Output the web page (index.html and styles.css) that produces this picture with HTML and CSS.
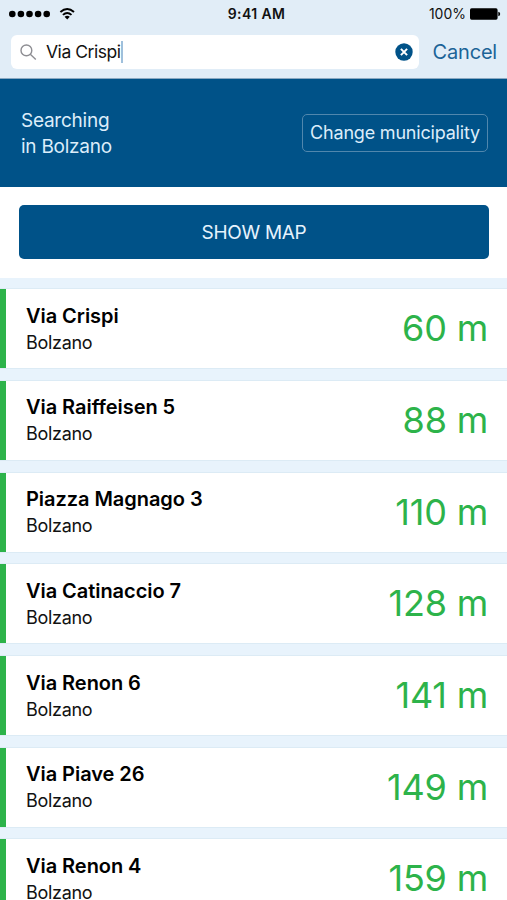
FILE: index.html
```
<!DOCTYPE html>
<html lang="en">

<head>
    <meta charset="utf-8">
    <title>Search address</title>
    <link rel="stylesheet" href="styles.css">
</head>

<body>
    <div id="header">
        <div class="statusbar">
            <div class="signal">
                <svg width="76" height="14" viewBox="0 0 76 14">
                    <circle cx="3.3" cy="7" r="3.3"/>
                    <circle cx="11.9" cy="7" r="3.3"/>
                    <circle cx="20.5" cy="7" r="3.3"/>
                    <circle cx="29.1" cy="7" r="3.3"/>
                    <circle cx="37.7" cy="7" r="3.3"/>
                    <g fill="none" stroke="#000" stroke-width="1.9">
                        <path d="M51.4 5 Q58.2 -1.2 65 5"/>
                        <path d="M53.9 7.9 Q58.2 4 62.5 7.9"/>
                    </g>
                    <path d="M55.6 9.8 Q58.2 7.6 60.8 9.8 L58.2 12.4Z"/>
                </svg>
            </div>
            <div class="clock">9:41 AM</div>
            <div class="battery">
                <span>100%</span>
                <svg width="31" height="12" viewBox="0 0 31 12">
                    <rect x="0" y="0.3" width="27.6" height="11.4" rx="1.6"/>
                    <path d="M28.3 3.8 Q30.2 4.3 30.2 6 Q30.2 7.7 28.3 8.2Z"/>
                </svg>
            </div>
        </div>
        <div class="searchbar">
            <div class="searchfield">
                <svg class="glass" width="17" height="17" viewBox="0 0 17 17">
                    <circle cx="6.4" cy="6.4" r="5.4"/>
                    <path d="M10.3 10.3 L15.8 15.4"/>
                </svg>
                <span class="query">Via Crispi</span><span class="caret"></span>
                <svg class="clear" width="18" height="18" viewBox="0 0 18 18">
                    <circle cx="9" cy="9" r="8.7"/>
                    <path d="M5.9 5.9 L12.1 12.1 M12.1 5.9 L5.9 12.1"/>
                </svg>
            </div>
            <a class="cancel">Cancel</a>
        </div>
    </div>
    <div id="area">
        <p>Searching<br>in Bolzano</p>
        <button type="button" class="change">Change municipality</button>
    </div>
    <div id="map">
        <button type="button" class="showmap">SHOW MAP</button>
    </div>
    <div id="results">
        <div class="result">
            <div>
                <h2>Via Crispi</h2>
                <p>Bolzano</p>
            </div>
            <span class="distance">60 m</span>
        </div>
        <div class="result">
            <div>
                <h2>Via Raiffeisen 5</h2>
                <p>Bolzano</p>
            </div>
            <span class="distance">88 m</span>
        </div>
        <div class="result">
            <div>
                <h2>Piazza Magnago 3</h2>
                <p>Bolzano</p>
            </div>
            <span class="distance">110 m</span>
        </div>
        <div class="result">
            <div>
                <h2>Via Catinaccio 7</h2>
                <p>Bolzano</p>
            </div>
            <span class="distance">128 m</span>
        </div>
        <div class="result">
            <div>
                <h2>Via Renon 6</h2>
                <p>Bolzano</p>
            </div>
            <span class="distance">141 m</span>
        </div>
        <div class="result">
            <div>
                <h2>Via Piave 26</h2>
                <p>Bolzano</p>
            </div>
            <span class="distance">149 m</span>
        </div>
        <div class="result">
            <div>
                <h2>Via Renon 4</h2>
                <p>Bolzano</p>
            </div>
            <span class="distance">159 m</span>
        </div>
    </div>
</body>

</html>
```
FILE: styles.css
```
* {
    box-sizing: border-box;
}

body {
    margin: 0;
    height: 900px;
    overflow: hidden;
    background-color: #e8f3fc;
    font-family: Inter, sans-serif;
    color: #111;
}

h2,
p {
    margin: 0;
}

button {
    font-family: inherit;
    padding: 0;
}

#header {
    height: 79px;
    background-color: #e1edf7;
    border-bottom: 1px solid #8aa9c2;
}

.statusbar {
    display: grid;
    grid-template-columns: 1fr auto 1fr;
    align-items: center;
    height: 27px;
    padding: 0 6px 0 9px;
}

.signal svg {
    display: block;
}

.clock {
    font-size: 14px;
    font-weight: 600;
    letter-spacing: 0.4px;
    padding-left: 3px;
}

.battery {
    display: flex;
    justify-content: flex-end;
    align-items: center;
    gap: 4px;
    font-size: 14px;
}

.searchbar {
    display: flex;
    align-items: center;
    justify-content: space-between;
    padding: 8px 10px 0 11px;
}

.searchfield {
    display: flex;
    align-items: center;
    width: 408px;
    height: 34px;
    padding: 0 6px 0 9px;
    border-radius: 6px;
    background-color: #fff;
}

.glass {
    margin-right: 9px;
    fill: none;
    stroke: #8e8e93;
    stroke-width: 1.4;
}

.query {
    padding-bottom: 1px;
    font-size: 17.5px;
    letter-spacing: -0.45px;
}

.caret {
    width: 2px;
    height: 22px;
    background-color: #9fc0dc;
}

.clear {
    margin-left: auto;
    fill: #005288;
}

.clear path {
    stroke: #fff;
    stroke-width: 2;
}

.cancel {
    font-size: 20px;
    letter-spacing: -0.2px;
    color: #1b6497;
}

#area {
    display: flex;
    justify-content: space-between;
    align-items: center;
    height: 107.5px;
    padding: 0 19px 0 21px;
    background-color: #005288;
    color: #dcedfa;
}

#area p {
    padding-top: 2px;
    font-size: 19px;
    line-height: 26px;
    letter-spacing: -0.25px;
}

.change {
    width: 186px;
    height: 38px;
    border: 1px solid #5187ad;
    border-radius: 5px;
    background-color: transparent;
    color: #dcedfa;
    font-size: 18px;
    letter-spacing: -0.2px;
}

#map {
    height: 91px;
    padding: 18.5px 18px 0 19px;
    background-color: #fff;
}

.showmap {
    width: 100%;
    height: 54px;
    border: none;
    border-radius: 5px;
    background-color: #005288;
    color: #e6f3fd;
    font-size: 19px;
    letter-spacing: -0.3px;
}

#results {
    display: flex;
    flex-direction: column;
    gap: 12.7px;
    padding-top: 11.8px;
}

.result {
    display: flex;
    justify-content: space-between;
    align-items: center;
    flex: none;
    height: 79px;
    padding: 0 19px 0 20px;
    border-left: 6px solid #2db34a;
    background-color: #fff;
    box-shadow: 0 0 0 1px #dcebf5;
}

.result h2 {
    font-size: 20px;
    font-weight: 600;
    line-height: 28px;
    letter-spacing: -0.05px;
    color: #000;
}

.result p {
    font-size: 18px;
    line-height: 26px;
    letter-spacing: -0.3px;
}

.distance {
    padding-bottom: 1px;
    font-size: 36px;
    letter-spacing: -0.2px;
    color: #2db34a;
}
```
